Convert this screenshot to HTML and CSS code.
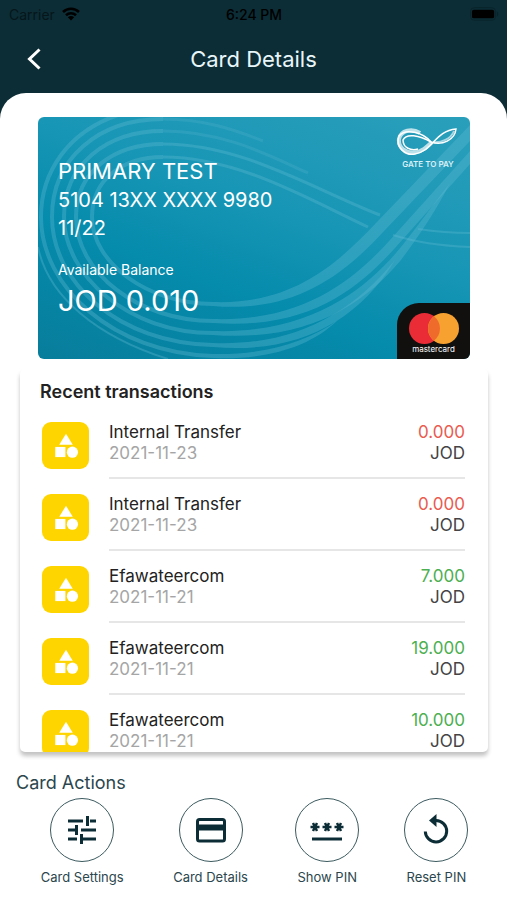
FILE: index.html
```html
<!DOCTYPE html>
<html lang="en">
<head>
<meta charset="utf-8">
<meta name="viewport" content="width=device-width, initial-scale=1">
<title>Card Details</title>
<link rel="stylesheet" href="styles.css">
</head>
<body>
<svg class="defs" aria-hidden="true">
  <symbol id="shapes" viewBox="0 0 24 24">
    <path d="M12 1.500 17.800 11H6.200z"/><circle cx="17.500" cy="17.300" r="4.800"/><path d="M2.800 12.800h8.700v8.700H2.800z"/>
  </symbol>
</svg>
<div class="app">
  <div class="status">
    <span class="carrier">Carrier
      <svg class="wifi" viewBox="0 0 18 14" aria-hidden="true"><path d="M1 5C5.500.6 12.500.6 17 5M4 8.200c2.800-2.700 7.200-2.700 10 0" fill="none" stroke="#000" stroke-width="2.600"/><path d="M9 13.600 5.800 10.300c1.800-1.700 4.600-1.700 6.400 0z"/></svg>
    </span>
    <span class="clock">6:24 PM</span>
    <svg class="battery" viewBox="0 0 30 14" aria-hidden="true"><rect x=".5" y=".5" width="26" height="13" rx="4" fill="none" stroke="#09232a"/><rect x="2" y="2.500" width="23" height="9" rx="2"/><path d="M28 4.500c2 1 2 4 0 5z" fill="#09232a"/></svg>
  </div>
  <header class="bar">
    <button class="back" aria-label="Back"><svg viewBox="0 0 14 22" aria-hidden="true"><path d="M12.500 1.500 2.500 11l10 9.500" fill="none" stroke="#fff" stroke-width="3"/></svg></button>
    <h1>Card Details</h1>
  </header>
  <main class="sheet">
    <section class="card">
      <svg class="art" viewBox="0 0 432 242" preserveAspectRatio="none" aria-hidden="true">
        <g fill="#5fb9d4" fill-opacity=".36">
          <path d="M175 185C255 188 300 146 338 106L432 8V24L347 113C304 160 255 196 175 189z"/>
          <path d="M175 202C270 205 320 158 352 123L432 34V47L357 131C320 172 270 213 175 206z"/>
          <path d="M175 214C270 217 325 174 358 136C378 112 396 86 412 66C398 94 380 120 363 143C325 188 270 225 175 218z"/>
          <path d="M175 226C255 229 312 198 357 143C318 208 255 237 175 230z"/>
          <path d="M175 237C225 238 268 226 300 203C270 232 225 243 175 241z"/>
        </g>
        <g fill="none" stroke="#5fb9d4" stroke-opacity=".36" stroke-width="4">
          <path d="M175 187C110 187 54 146 54 100C54 62 85 40 125 40"/>
          <path d="M175 204C100 204 38 155 38 100C38 55 75 27 125 27"/>
          <path d="M175 216C90 216 26 158 26 100C26 48 68 14 125 14"/>
          <path d="M175 228C80 226 14 165 14 100C14 42 60 2 125 2"/>
          <path d="M175 239C75 236 3 170 3 100C3 55 30 15 80-2"/>
        </g>
        <g fill="none" stroke="#5fb9d4" stroke-opacity=".36" stroke-width="3">
          <path d="M125 40C200 40 270 82 330 110M125 27C205 27 275 72 342 98"/>
          <path stroke-opacity=".24" d="M125 14C185 14 230 38 270 56M125 2C165 2 195 12 225 24"/>
          <path stroke-width="2" d="M355 118C380 126 405 129 432 130M380 112C400 115 416 116 432 116M130 242C60 220 10 180 0 130"/>
        </g>
      </svg>
      <svg class="brand" viewBox="0 0 64 42" role="img" aria-label="Gate to Pay">
        <g fill="none" stroke="#fff">
          <path stroke-width="4" stroke-opacity=".7" d="M25 6C17 1 6 3 4 12C3 21 11 26 19 25.500C27 25 32 20 37 15"/>
          <path stroke-width="1.500" d="M36 15C28 5 10 1 4 9C0 20 10 29 20 27C38 24 40 4 61 2C60 13 47 19 36 15"/>
          <path stroke-width="1.500" d="M36 15C24 8 11 6 8 13C8 21 16 24 23 22"/>
          <path stroke-width="2" stroke-opacity=".6" d="M38 15C46 16 56 12 59 4"/>
        </g>
        <text x="33" y="40" text-anchor="middle">GATE TO PAY</text>
      </svg>
      <div class="info">
        <p class="name">PRIMARY TEST</p>
        <p class="number">5104 13XX XXXX 9980</p>
        <p class="number">11/22</p>
        <p class="label">Available Balance</p>
        <p class="balance">JOD 0.010</p>
      </div>
      <div class="network">
        <svg viewBox="0 0 50 31" aria-hidden="true"><circle cx="15.500" cy="15.500" r="15.500" fill="#ea2c37"/><circle cx="34.500" cy="15.500" r="15.500" fill="#f7a131"/><path d="M25 3.250a15.500 15.500 0 0 1 0 24.500a15.500 15.500 0 0 1 0-24.500z" fill="#ef6b2c"/></svg>
        <span>mastercard</span>
      </div>
    </section>
    <section class="panel">
      <h2>Recent transactions</h2>
      <ul class="list">
        <li><span class="tile"><svg aria-hidden="true"><use href="#shapes"/></svg></span><div class="row"><div><p>Internal Transfer</p><p class="date">2021-11-23</p></div><div class="sum"><p class="out">0.000</p><p>JOD</p></div></div></li>
        <li><span class="tile"><svg aria-hidden="true"><use href="#shapes"/></svg></span><div class="row"><div><p>Internal Transfer</p><p class="date">2021-11-23</p></div><div class="sum"><p class="out">0.000</p><p>JOD</p></div></div></li>
        <li><span class="tile"><svg aria-hidden="true"><use href="#shapes"/></svg></span><div class="row"><div><p>Efawateercom</p><p class="date">2021-11-21</p></div><div class="sum"><p class="in">7.000</p><p>JOD</p></div></div></li>
        <li><span class="tile"><svg aria-hidden="true"><use href="#shapes"/></svg></span><div class="row"><div><p>Efawateercom</p><p class="date">2021-11-21</p></div><div class="sum"><p class="in">19.000</p><p>JOD</p></div></div></li>
        <li><span class="tile"><svg aria-hidden="true"><use href="#shapes"/></svg></span><div class="row"><div><p>Efawateercom</p><p class="date">2021-11-21</p></div><div class="sum"><p class="in">10.000</p><p>JOD</p></div></div></li>
      </ul>
    </section>
    <section class="actions">
      <h2>Card Actions</h2>
      <div class="buttons">
        <button><span class="ring"><svg viewBox="0 0 36 36" aria-hidden="true"><path d="M4 9h15M26 9h6M23.500 4v10M4 18h7M17 18h15M12.500 13v10M4 27h9M19 27h13M17.500 22v10" fill="none" stroke="#0c2d36" stroke-width="3"/></svg></span>Card Settings</button>
        <button><span class="ring"><svg viewBox="0 0 36 36" aria-hidden="true"><rect x="4.500" y="7.500" width="27" height="21.500" rx="2" fill="none" stroke="#0c2d36" stroke-width="3"/><path d="M4 12.500h28v6H4z" fill="#0c2d36"/></svg></span>Card Details</button>
        <button><span class="ring"><svg viewBox="0 0 36 36" aria-hidden="true"><path d="M3 27h30" fill="none" stroke="#0c2d36" stroke-width="3"/><path d="M1.500 15h9M4 11l4 8M8 11l-4 8M13.500 15h9M16 11l4 8M20 11l-4 8M25.500 15h9M28 11l4 8M32 11l-4 8" fill="none" stroke="#0c2d36" stroke-width="2.500"/></svg></span>Show PIN</button>
        <button><span class="ring"><svg viewBox="0 0 36 36" aria-hidden="true"><path d="M16 8.500h2a10.700 10.700 0 1 1-10.700 11" fill="none" stroke="#0c2d36" stroke-width="3"/><path d="M18.500 2v13L11 8.500z" fill="#0c2d36"/></svg></span>Reset PIN</button>
      </div>
    </section>
  </main>
</div>
</body>
</html>
```
FILE: styles.css
```css
* { box-sizing: border-box; margin: 0; padding: 0; }
body { font-family: Inter, "Liberation Sans", sans-serif; color: #222; background: #0c2d36; }
button { border: 0; background: none; font: inherit; color: inherit; cursor: pointer; }
.defs { display: block; width: 0; height: 0; }
.app { display: flex; flex-direction: column; height: 100vh; }

.status { display: grid; grid-template-columns: 1fr auto 1fr; align-items: center; height: 28px; padding: 0 8px 0 9px; font-size: 14px; color: #000; }
.carrier { display: flex; align-items: center; gap: 7px; color: #06161a; }
.wifi { width: 18px; height: 14px; }
.clock { font-weight: 500; }
.battery { width: 29px; height: 14px; justify-self: end; }

.bar { display: grid; grid-template-columns: 68px 1fr 68px; align-items: center; height: 65px; padding-bottom: 3px; color: #e8f6fa; }
.back { display: flex; justify-content: center; padding: 8px; }
.back svg { width: 14px; height: 22px; }
.bar h1 { font-size: 22px; font-weight: 400; text-align: center; }

.sheet { flex: 1; min-height: 0; display: flex; flex-direction: column; padding-top: 24px; background: #fff; border-radius: 26px 26px 0 0; }

.card { position: relative; flex: none; margin: 0 37px 0 38px; aspect-ratio: 432 / 242; border-radius: 6px; overflow: hidden; color: #fff; background: linear-gradient(20deg, #087d9b 0%, #058bac 35%, #1896b5 60%, #2a9fbb 100%); }
.art { position: absolute; inset: 0; width: 100%; height: 100%; }
.brand { position: absolute; top: 10px; right: 11px; width: 64px; height: 42px; }
.brand text { font: 600 8px Inter, sans-serif; fill: #d8f0f7; }
.info { position: relative; padding: 40px 20px; }
.name { font-size: 22px; line-height: 29px; }
.number { font-size: 20px; line-height: 28px; }
.label { margin-top: 17px; font-size: 14px; line-height: 22px; }
.balance { font-size: 29px; line-height: 40px; }
.network { position: absolute; right: 0; bottom: 0; display: flex; flex-direction: column; align-items: center; width: 73px; height: 56px; padding-top: 10px; border-radius: 22px 0 0 0; background: #11100e; }
.network svg { width: 50px; height: 31px; }
.network span { font-size: 8px; line-height: 11px; }

.panel { flex: 1; min-height: 0; display: flex; flex-direction: column; margin: 10px 19px 0 20px; padding: 8px 23px 0 20px; border-radius: 5px; box-shadow: 0 4px 4px rgba(0, 0, 0, .24); }
.panel h2 { font-size: 18px; font-weight: 600; line-height: 30px; }
.list { flex: 1; min-height: 0; overflow-y: auto; scrollbar-width: none; list-style: none; }
.list li { display: flex; gap: 20px; height: 72px; padding-left: 2px; }
.tile { flex: none; display: flex; align-items: center; justify-content: center; width: 47px; height: 47px; margin-top: 15px; border-radius: 9px; background: #ffd500; }
.tile svg { width: 28px; height: 28px; fill: #fff; }
.row { flex: 1; display: flex; justify-content: space-between; padding-top: 15px; font-size: 17px; line-height: 21px; border-bottom: 2px solid #e6e6e6; }
.date { color: #a5a5a5; }
.sum { text-align: right; color: #444; }
.out { color: #ea5b50; }
.in { color: #4caf50; }

.actions { padding: 19px 16px 13px; color: #2b464d; }
.actions h2 { font-size: 18px; font-weight: 400; line-height: 24px; }
.buttons { display: flex; justify-content: space-around; margin-top: 3px; }
.buttons button { display: flex; flex-direction: column; align-items: center; gap: 5px; font-size: 13px; line-height: 20px; }
.ring { display: flex; align-items: center; justify-content: center; width: 64px; height: 64px; margin: 0 -4px; border: 1px solid #3b5a5f; border-radius: 50%; }
.ring svg { width: 36px; height: 36px; }
```
